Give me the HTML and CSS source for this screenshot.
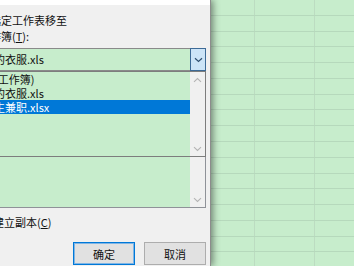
FILE: index.html
```html
<!DOCTYPE html>
<html lang="zh-CN">
<head>
<meta charset="utf-8">
<title>移动或复制工作表</title>
<link rel="stylesheet" href="styles.css">
</head>
<body>
<div class="screen">
  <div class="dialog">
    <div class="titlebar"></div>
    <div class="body">
      <div class="label">将选定工作表移至</div>
      <div class="label">工作簿(<u>T</u>):</div>
      <div class="combo">
        <div class="combo-text">我的衣服.xls</div>
        <div class="combo-btn">
          <svg width="9" height="6" viewBox="0 0 9 6"><path d="M1 1.2 L4.5 4.5 L8 1.2" fill="none" stroke="#2f4f6f" stroke-width="1.2"/></svg>
        </div>
        <div class="popup">
          <div class="items">
            <div class="item">(新工作簿)</div>
            <div class="item">我的衣服.xls</div>
            <div class="item selected">学生兼职.xlsx</div>
          </div>
          <div class="scrollbar">
            <div class="sb-btn"><svg width="9" height="6" viewBox="0 0 9 6"><path d="M1 4.8 L4.5 1.5 L8 4.8" fill="none" stroke="#b4b4b4" stroke-width="1.1"/></svg></div>
            <div class="sb-btn"><svg width="9" height="6" viewBox="0 0 9 6"><path d="M1 1.2 L4.5 4.5 L8 1.2" fill="none" stroke="#b4b4b4" stroke-width="1.1"/></svg></div>
          </div>
        </div>
      </div>
      <div class="listbox">
        <div class="items"></div>
        <div class="scrollbar">
          <div class="sb-btn"><svg width="9" height="6" viewBox="0 0 9 6"><path d="M1 4.8 L4.5 1.5 L8 4.8" fill="none" stroke="#b4b4b4" stroke-width="1.1"/></svg></div>
          <div class="sb-btn"><svg width="9" height="6" viewBox="0 0 9 6"><path d="M1 1.2 L4.5 4.5 L8 1.2" fill="none" stroke="#b4b4b4" stroke-width="1.1"/></svg></div>
        </div>
      </div>
      <div class="check"><span class="box"></span><span>建立副本(<u>C</u>)</span></div>
      <div class="buttons">
        <button class="btn btn-default">确定</button>
        <button class="btn">取消</button>
      </div>
    </div>
  </div>
  <div class="sheet"></div>
</div>
</body>
</html>
```
FILE: styles.css
```css
* { box-sizing: border-box; }
html, body { margin: 0; padding: 0; }
body {
  width: 354px;
  height: 266px;
  overflow: hidden;
  font-family: "Noto Sans CJK SC", "Noto Sans", sans-serif;
  font-size: 11px;
  color: #111;
  background: #c7edcc;
}
.screen {
  display: flex;
  height: 266px;
  overflow: hidden;
}
.dialog {
  position: relative;
  z-index: 2;
  flex: none;
  width: 241px;
  margin-left: -30px;
  background: #f0f0f0;
  border-right: 1px solid #8c8c8c;
  box-shadow: 2px 0 7px rgba(0, 0, 0, 0.45);
  display: flex;
  flex-direction: column;
}
.titlebar {
  height: 5px;
  background: #ffffff;
}
.body {
  flex: 1;
  padding: 8px 4px 0 9px;
  display: flex;
  flex-direction: column;
}
.label {
  height: 14px;
  line-height: 14px;
  white-space: nowrap;
}
.label + .label { margin-top: 2px; }
.combo {
  position: relative;
  margin-top: 5px;
  height: 23px;
  display: flex;
  background: #c7edcc;
  border: 1px solid #8a8a8a;
  border-right: none;
}
.combo-text {
  flex: 1;
  line-height: 21px;
  padding-left: 3px;
  white-space: nowrap;
}
.combo-btn {
  flex: none;
  width: 16px;
  margin-top: -1px;
  margin-bottom: -1px;
  background: #cce4f7;
  border: 1px solid #3d6a96;
  display: flex;
  align-items: center;
  justify-content: center;
}
.popup {
  position: absolute;
  top: 22px;
  left: -1px;
  right: 0;
  height: 86px;
  background: #c7edcc;
  border: 1px solid #7d7d7d;
  display: flex;
}
.items {
  flex: 1;
}
.item {
  height: 14px;
  line-height: 14px;
  padding-left: 3px;
  white-space: nowrap;
}
.item.selected {
  background: #0078d7;
  color: #fff;
}
.scrollbar {
  flex: none;
  width: 15px;
  background: #f0f0f0;
  display: flex;
  flex-direction: column;
  justify-content: space-between;
}
.sb-btn {
  height: 15px;
  display: flex;
  align-items: center;
  justify-content: center;
}
.listbox {
  margin-top: 23px;
  height: 114px;
  display: flex;
  background: #c7edcc;
  border: 1px solid #8f9298;
}
.check {
  margin-top: 7px;
  height: 14px;
  line-height: 14px;
  display: flex;
  align-items: center;
  white-space: nowrap;
}
.box {
  width: 13px;
  height: 13px;
  margin-right: 1px;
  background: #fff;
  border: 1px solid #333;
}
.buttons {
  margin-top: 13px;
  display: flex;
  justify-content: flex-end;
  gap: 9px;
}
.btn {
  width: 62px;
  height: 23px;
  padding: 0;
  font-family: "Noto Sans CJK SC", "Noto Sans", sans-serif;
  font-size: 11px;
  color: #111;
  background: #e1e1e1;
  border: 1px solid #adadad;
}
.btn-default {
  border-color: #0078d7;
  box-shadow: inset 0 0 0 1px #7fb5e5;
}
.sheet {
  flex: 1;
  background-color: #c7edcc;
  background-image:
    repeating-linear-gradient(to bottom, transparent 0, transparent 14.8px, #b6d9bc 14.8px, #b6d9bc 15.78px),
    repeating-linear-gradient(to right, transparent 0, transparent 43px, #bcdcc1 43px, #bcdcc1 44px, transparent 44px, transparent 60px);
}
```
